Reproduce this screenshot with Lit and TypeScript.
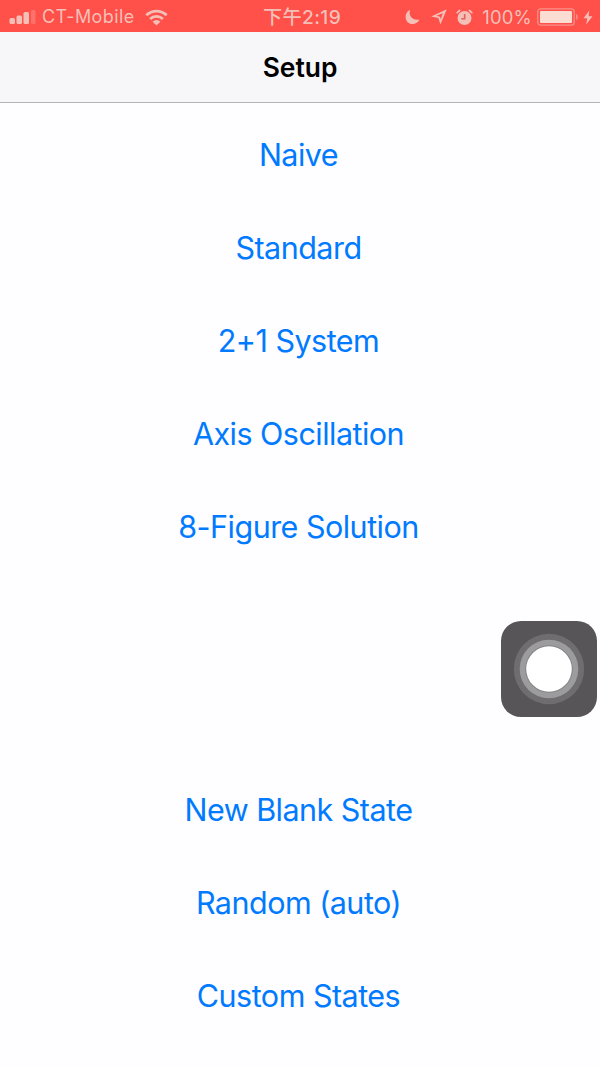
import { LitElement, html, css } from "lit";
import { customElement } from "lit/decorators.js";

const PRESETS = ["Naive", "Standard", "2+1 System", "Axis Oscillation", "8-Figure Solution"];
const CUSTOM = ["New Blank State", "Random (auto)", "Custom States"];

@customElement("status-bar")
class StatusBar extends LitElement {
  static styles = css`
    :host {
      display: grid;
      grid-template-columns: 1fr auto 1fr;
      align-items: center;
      height: 32px;
      box-sizing: border-box;
      padding: 2px 7px 0 9px;
      background: #ff5049;
      color: #f4bfb7;
      font: 400 18px/30px Inter, "Noto Sans CJK SC", sans-serif;
      white-space: nowrap;
    }
    svg { display: block; fill: currentColor; }
    .side { display: flex; align-items: center; }
    .right { justify-content: flex-end; }
    .carrier { margin-left: 6px; letter-spacing: 0.4px; }
    .wifi { margin-left: 10px; }
    .time { padding-left: 2px; font-size: 19.2px; line-height: 28px; font-weight: 500; letter-spacing: 0.35px; }
    .moon { margin-right: 11px; }
    .arrow { margin-right: 9px; }
    .alarm { margin-right: 9px; }
    .level { margin-right: 5px; font-size: 18.5px; letter-spacing: 0.2px; }
    .battery { margin-right: 4px; }
  `;

  render() {
    return html`
      <div class="side">
        <svg width="27" height="14" viewBox="0 0 27 14">
          <rect x="0.5" y="8" width="5.5" height="6" rx="1.5" />
          <rect x="7.5" y="5.5" width="5.5" height="8.5" rx="1.5" />
          <rect x="14.5" y="2" width="5.5" height="12" rx="1.5" />
          <rect x="22" y="0" width="4.5" height="14" rx="1.5" opacity="0.3" />
        </svg>
        <span class="carrier">CT-Mobile</span>
        <svg class="wifi" width="23" height="17" viewBox="0 0 23 17">
          <g fill="none" stroke="currentColor" stroke-width="2.8">
            <path d="M1.3 6.3a14.5 14.5 0 0 1 20.4 0" />
            <path d="M5.1 10.1a9.1 9.1 0 0 1 12.8 0" />
          </g>
          <path d="M7.6 12.7a5.6 5.6 0 0 1 7.8 0L11.5 16.6z" />
        </svg>
      </div>
      <span class="time">下午2:19</span>
      <div class="side right">
        <svg class="moon" width="15" height="16" viewBox="0 0 15 16">
          <path d="M5.2.8C3 6.8 7.8 12 14.5 10.4 12.7 14.2 8.2 16.3 4.2 14.2-.8 11.5-.8 3.6 5.2.8z" />
        </svg>
        <svg class="arrow" width="16" height="16" viewBox="0 0 16 16">
          <path fill-rule="evenodd" d="M15.8.2 9.4 15.6 7.4 9 .2 7.4zM11.8 4.2 5.4 6.8l3.6 1 .8 2.4z" />
        </svg>
        <svg class="alarm" width="17" height="17" viewBox="0 0 17 17">
          <circle cx="8.5" cy="9" r="7" />
          <path fill="none" stroke="currentColor" stroke-width="1.7" stroke-linecap="round"
            d="M1.2 3.6 3.6 1.5M15.8 3.6 13.4 1.5" />
          <path fill="none" stroke="#e0625a" stroke-width="1.6" d="M8.7 5v4.7H5.3" />
        </svg>
        <span class="level">100%</span>
        <svg class="battery" width="42" height="18" viewBox="0 0 42 18">
          <rect x="0.8" y="0.8" width="36.4" height="16.4" rx="3" fill="none"
            stroke="currentColor" stroke-width="1.2" opacity="0.6" />
          <rect x="3" y="3" width="32" height="12" rx="1" fill="#fbdcd2" />
          <path d="M39 6q2 .6 2 3t-2 3z" opacity="0.5" />
        </svg>
        <svg width="10" height="15" viewBox="0 0 10 15">
          <path d="M6.3.5.5 8.2h3.8L3.2 14.5 9.5 6.3H5.6z" />
        </svg>
      </div>
    `;
  }
}

@customElement("assistive-button")
class AssistiveButton extends LitElement {
  static styles = css`
    :host { display: block; }
    svg { display: block; }
  `;

  render() {
    return html`
      <svg width="96" height="96" viewBox="0 0 96 96">
        <rect width="96" height="96" rx="20" fill="#575557" />
        <circle cx="48" cy="48" r="35.2" fill="#6f6d70" />
        <circle cx="48" cy="48" r="29.3" fill="#9c9b9e" />
        <circle cx="48" cy="48" r="23.8" fill="#858386" />
        <circle cx="48" cy="48" r="22.8" fill="#ffffff" />
      </svg>
    `;
  }
}

@customElement("app-root")
class AppRoot extends LitElement {
  static styles = css`
    :host {
      display: flex;
      flex-direction: column;
      position: relative;
      width: 600px;
      height: 1067px;
      overflow: hidden;
      background: #fefdff;
      font-family: Inter, sans-serif;
    }
    .nav {
      height: 70px;
      border-bottom: 1px solid #b5b3b7;
      background: #f7f6f9;
      color: #000;
      text-align: center;
      font-size: 26.4px;
      font-weight: 600;
      line-height: 71px;
    }
    main {
      flex: 1;
      display: flex;
      flex-direction: column;
      justify-content: space-between;
      padding: 5px 0 25px;
    }
    .group { display: grid; grid-auto-rows: 93px; }
    button {
      all: unset;
      padding-right: 3px;
      text-align: center;
      color: #007aff;
      font-size: 30.5px;
      letter-spacing: -0.52px;
      line-height: 93px;
      cursor: pointer;
      white-space: nowrap;
    }
    assistive-button { position: absolute; left: 501px; top: 621px; }
  `;

  render() {
    const row = (label: string) => html`<button>${label}</button>`;
    return html`
      <status-bar></status-bar>
      <div class="nav">Setup</div>
      <main>
        <div class="group">${PRESETS.map(row)}</div>
        <div class="group">${CUSTOM.map(row)}</div>
      </main>
      <assistive-button></assistive-button>
    `;
  }
}
